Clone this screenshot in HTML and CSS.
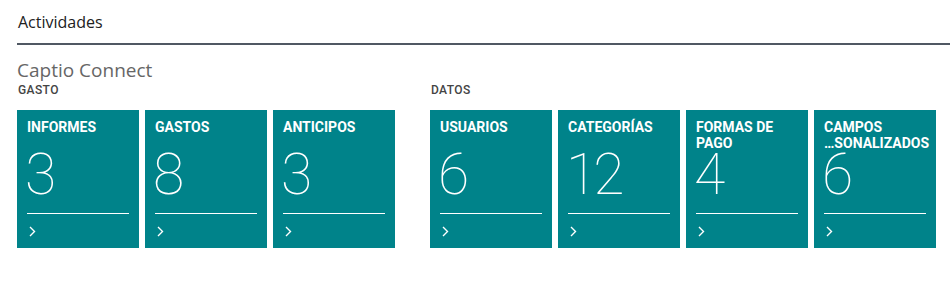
FILE: index.html
```html
<!DOCTYPE html>
<html lang="es">
<head>
  <meta charset="UTF-8" />
  <title>Actividades</title>
  <link rel="stylesheet" href="styles.css">
</head>
<body>
  <div class="page">
    <h1 class="page-title">Actividades</h1>
    <h2 class="group-title">Captio Connect</h2>
    <div class="groups">
      <div class="group">
        <div class="group-label">GASTO</div>
        <div class="tiles">
          <a class="tile">
            <span class="tile-name">INFORMES</span>
            <span class="tile-value">3</span>
            <svg class="tile-more" width="7" height="11" viewBox="0 0 7 11"><polyline points="1,1 5.5,5.5 1,10" /></svg>
          </a>
          <a class="tile">
            <span class="tile-name">GASTOS</span>
            <span class="tile-value">8</span>
            <svg class="tile-more" width="7" height="11" viewBox="0 0 7 11"><polyline points="1,1 5.5,5.5 1,10" /></svg>
          </a>
          <a class="tile">
            <span class="tile-name">ANTICIPOS</span>
            <span class="tile-value">3</span>
            <svg class="tile-more" width="7" height="11" viewBox="0 0 7 11"><polyline points="1,1 5.5,5.5 1,10" /></svg>
          </a>
        </div>
      </div>
      <div class="group">
        <div class="group-label">DATOS</div>
        <div class="tiles">
          <a class="tile">
            <span class="tile-name">USUARIOS</span>
            <span class="tile-value">6</span>
            <svg class="tile-more" width="7" height="11" viewBox="0 0 7 11"><polyline points="1,1 5.5,5.5 1,10" /></svg>
          </a>
          <a class="tile">
            <span class="tile-name">CATEGORÍAS</span>
            <span class="tile-value">12</span>
            <svg class="tile-more" width="7" height="11" viewBox="0 0 7 11"><polyline points="1,1 5.5,5.5 1,10" /></svg>
          </a>
          <a class="tile">
            <span class="tile-name">FORMAS DE<br>PAGO</span>
            <span class="tile-value">4</span>
            <svg class="tile-more" width="7" height="11" viewBox="0 0 7 11"><polyline points="1,1 5.5,5.5 1,10" /></svg>
          </a>
          <a class="tile">
            <span class="tile-name">CAMPOS<br>…SONALIZADOS</span>
            <span class="tile-value">6</span>
            <svg class="tile-more" width="7" height="11" viewBox="0 0 7 11"><polyline points="1,1 5.5,5.5 1,10" /></svg>
          </a>
        </div>
      </div>
    </div>
  </div>
</body>
</html>
```

FILE: styles.css
```css
body {
  margin: 0;
  font-family: "Open Sans", sans-serif;
  background-color: #fff;
  color: #333;
}

.page {
  padding: 0 0 0 17px;
}

.page-title {
  margin: 0;
  padding: 11px 0 0 1px;
  height: 32px;
  font-size: 16px;
  font-weight: 400;
  color: #212121;
  border-bottom: 2px solid #505863;
}

.group-title {
  margin: 0;
  padding-top: 12px;
  font-size: 19px;
  font-weight: 400;
  line-height: 26px;
  color: #666;
}

.groups {
  display: flex;
  gap: 35px;
}

.group-label {
  font-family: Roboto, sans-serif;
  font-size: 12px;
  font-weight: 500;
  letter-spacing: 0.4px;
  color: #444;
  line-height: 14px;
  margin-left: 1px;
  height: 27px;
}

.tiles {
  display: flex;
  gap: 6px;
}

.tile {
  width: 122px;
  height: 138px;
  box-sizing: border-box;
  padding: 9px 10px 0 10px;
  background-color: #00838a;
  color: #fff;
  display: flex;
  flex-direction: column;
  font-family: Roboto, sans-serif;
}

.tile-name {
  font-size: 14px;
  font-weight: 700;
  line-height: 16px;
  height: 32px;
  white-space: nowrap;
}

.tile-value {
  font-size: 57px;
  font-weight: 100;
  line-height: 48px;
  height: 62px;
  letter-spacing: -4px;
  text-indent: -2px;
  border-bottom: 1px solid #fff;
}

.tile-more {
  margin: 12px 0 0 2px;
  fill: none;
  stroke: #fff;
  stroke-width: 1.4;
}
```
